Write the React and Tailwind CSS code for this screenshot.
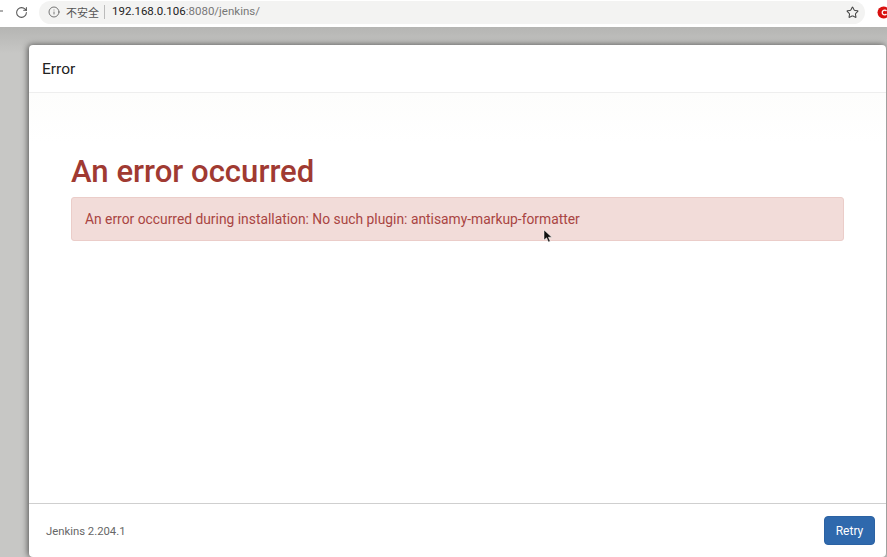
import React from "react";
import { RotateCw, Info, Star } from "lucide-react";

const ROBOTO = "font-['Roboto',sans-serif]";

function BrowserBar() {
  return (
    <div className="h-[27px] shrink-0 bg-white flex items-center overflow-hidden">
      {/* tip of the back arrow, cut off by the window edge */}
      <svg width="3" height="8" viewBox="0 0 3 8" className="shrink-0 -mt-[5px]">
        <path d="M0 4h3" stroke="#777" strokeWidth="1.2" fill="none" />
      </svg>
      <RotateCw size={13} strokeWidth={1.9} className="ml-[12px] text-[#555] shrink-0 -mt-[3px]" />
      <div className="ml-[11px] h-[23px] w-[826px] -mt-[3px] shrink-0 rounded-full bg-[#f3f3f2] flex items-center pl-[9px] pr-[6px]">
        <Info size={12} strokeWidth={1.6} className="text-[#555] shrink-0" />
        <span className="ml-[6px] text-[11px] text-[#555] font-['Noto_Sans_CJK_SC',sans-serif]">不安全</span>
        <span className="ml-[5px] h-[14px] w-px bg-[#bbb]" />
        <span className={`ml-[7px] text-[11.5px] text-[#222] ${ROBOTO}`}>
          192.168.0.106<span className="text-[#777]">:8080/jenkins/</span>
        </span>
        <Star size={13} strokeWidth={1.9} className="ml-auto text-[#444] shrink-0" />
      </div>
      {/* extension icon, cut off by the window edge */}
      <svg width="11" height="13" viewBox="0 0 11 13" className="ml-[12px] shrink-0 -mt-[3px]">
        <circle cx="6.5" cy="6.5" r="6" fill="#d9100f" />
        <path d="M9.5 5a2.4 2.4 0 1 0 0 3" stroke="#fff" strokeWidth="1.3" fill="none" />
      </svg>
    </div>
  );
}

export default function App() {
  return (
    <div className={`relative h-[557px] overflow-hidden flex flex-col bg-white ${ROBOTO}`}>
      <BrowserBar />

      <div className="flex-1 min-h-0 bg-gradient-to-b from-[#b5b5b3] to-[#c7c7c5] to-[5%] pt-[18px] pl-[29px] pr-[1px]">
        <div className="h-[512px] bg-white rounded-[4px] flex flex-col shadow-[-1px_0_6px_rgba(0,0,0,0.6)]">
          <div className="h-[48px] shrink-0 border-b border-[#eeeeee] flex items-center pl-[13px] pt-[3px]">
            <h2 className="text-[15.5px] leading-none font-normal text-[#222]">Error</h2>
          </div>

          <div className="h-[410px] shrink-0 pt-[61px] px-[42px] bg-gradient-to-b from-[#fdfdfc] to-white to-[12%]">
            <h1 className="text-[31.1px] leading-[36px] font-medium text-[#a03a32]">An error occurred</h1>
            <div className="mt-[7px] h-[44px] w-[773px] flex items-center px-[13px] bg-[#f2dcd9] border border-[#ebcdc9] rounded-[3px] text-[13.83px] text-[#a94442]">
              An error occurred during installation: No such plugin: antisamy-markup-formatter
            </div>
          </div>

          <div className="flex-1 border-t border-[#cfcfcf] flex items-center justify-between pl-[17px] pr-[11px]">
            <span className="pt-[3px] text-[11.3px] text-[#666]">Jenkins 2.204.1</span>
            <button className="h-[29px] w-[51px] bg-[#2f69ad] border border-[#2b62a3] rounded-[4px] text-[12px] text-white">
              Retry
            </button>
          </div>
        </div>
      </div>

      {/* mouse pointer on top of the page */}
      <svg width="11" height="15" viewBox="0 0 11 15" className="absolute left-[543px] top-[229px]">
        <path d="M1 1v10l2.6-2.2L5.4 13l1.8-.8-1.8-4h3.4z" fill="#111" stroke="#fff" strokeWidth="0.5" />
      </svg>
    </div>
  );
}
